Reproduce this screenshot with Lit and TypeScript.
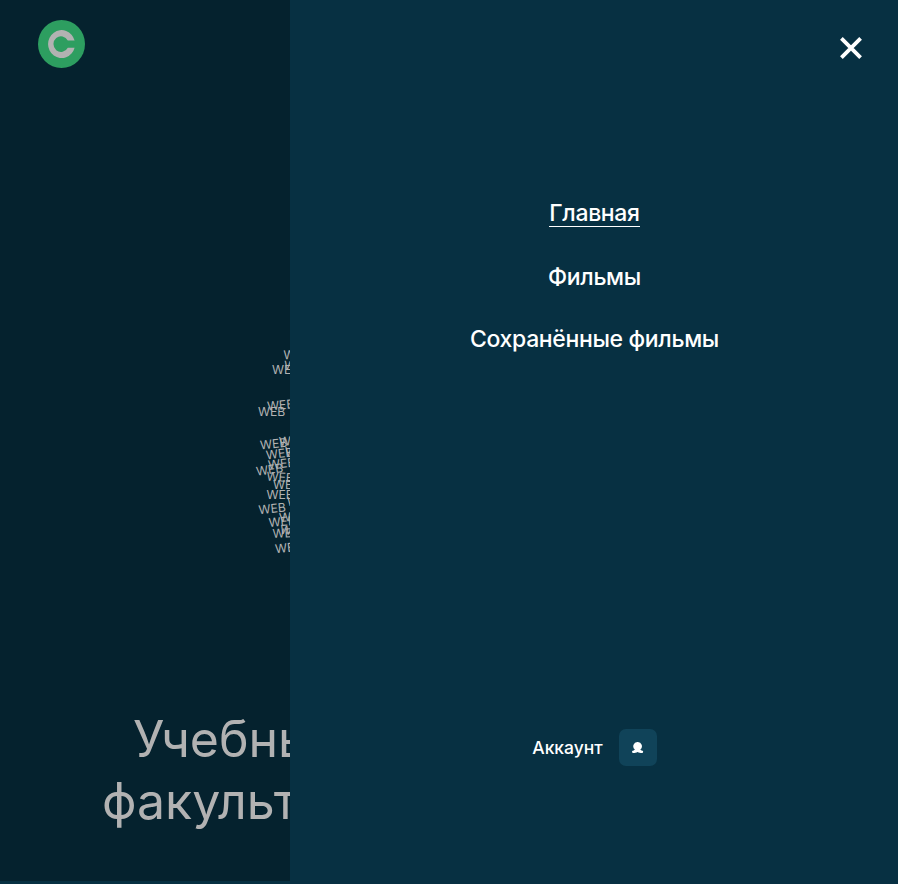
import { LitElement, html, css, svg } from "lit";
import { customElement } from "lit/decorators.js";

// Words scattered over the globe: left edge, vertical centre, tilt in degrees
const WORDS: [number, number, number][] = [
  [283.5, 354.6, -1], [284, 366, 4], [272, 369.6, 0], [267, 405, -5], [258, 411.6, 0],
  [260, 443.7, -6], [279, 440.6, -4], [266, 453.6, -7], [285, 451.6, 0], [268, 463.6, -6],
  [256, 469.6, -8], [266.5, 477, 4], [273, 484.6, 0], [266.5, 494.6, 0], [287, 501.5, 0],
  [258.5, 508.6, -6], [279, 516.6, -5], [268.5, 521.6, -5], [272.5, 533, -3], [280, 531, 8],
  [275, 547.4, -6],
];

@customElement("app-root")
export class AppRoot extends LitElement {
  static styles = css`
    :host {
      display: grid;
      grid-template-columns: 290px 1fr;
      height: 884px;
      overflow: hidden;
      background: #073042;
      color: #fff;
      font-family: Inter, sans-serif;
    }
    .hero {
      position: relative;
      display: flex;
      flex-direction: column;
      justify-content: space-between;
      height: 881px;
      box-sizing: border-box;
      padding: 20px 0 49px 38px;
      overflow: hidden;
      background: #05222e;
    }
    .logo { display: block; width: 47px; height: 48px; }
    .globe { position: absolute; inset: 0; width: 290px; height: 881px; }
    .word { font: 400 12.2px Inter, sans-serif; fill: #b2b2b2; }
    h1 {
      margin: 0;
      font-size: 50px;
      font-weight: 400;
      line-height: 62px;
      color: #b2b2b2;
      white-space: nowrap;
    }
    h1 span { display: block; padding-left: 64px; }
    h1 span:first-child { padding-left: 95px; }
    .menu {
      display: flex;
      flex-direction: column;
      align-items: center;
      box-sizing: border-box;
      padding: 37px 36px 118px;
    }
    .close {
      align-self: flex-end;
      width: 22px;
      height: 22px;
      padding: 0;
      border: 0;
      background: none;
      color: #fff;
    }
    .close svg { display: block; }
    nav {
      display: flex;
      flex-direction: column;
      align-items: center;
      margin-top: 139px;
      padding-left: 1px;
      font-size: 23px;
      font-weight: 500;
      letter-spacing: -0.35px;
      line-height: 30px;
    }
    nav a { margin-bottom: 32px; }
    nav a.current {
      height: 28px;
      border-bottom: 1px solid #fff;
      margin-bottom: 35px;
    }
    .account {
      display: flex;
      align-items: center;
      gap: 16px;
      margin-top: auto;
      padding-left: 1px;
      font-size: 17.5px;
      font-weight: 500;
    }
    .badge {
      display: grid;
      place-items: center;
      width: 38px;
      height: 37px;
      border-radius: 7px;
      background: #104359;
    }
  `;

  render() {
    return html`
      <section class="hero">
        <svg class="globe" viewBox="0 0 290 881">
          ${WORDS.map(([x, y, r]) => svg`<text class="word" transform="translate(${x} ${y + 4.4}) rotate(${r} 13 -4)">WEB</text>`)}
        </svg>
        <svg class="logo" viewBox="0 0 47 48">
          <ellipse cx="23.5" cy="24" rx="23.5" ry="24" fill="#2d9e60"></ellipse>
          <path d="M36.600 20.500H29.800A7.600 7.800 0 1 0 29.800 27.700H36.600A13.500 14 0 1 1 36.600 20.500Z" fill="#b2b2b2"></path>
        </svg>
        <h1><span>Учебный</span><span>факультета</span></h1>
      </section>
      <aside class="menu">
        <button class="close" aria-label="Закрыть">
          <svg width="22" height="22" viewBox="0 0 22 22"><path d="M1.400 1.400 20.600 20.600M20.600 1.400 1.400 20.600" stroke="currentColor" stroke-width="3.8"></path></svg>
        </button>
        <nav>
          <a class="current">Главная</a>
          <a>Фильмы</a>
          <a>Сохранённые фильмы</a>
        </nav>
        <div class="account">
          <span>Аккаунт</span>
          <span class="badge">
            <svg width="12" height="12" viewBox="0 0 12 12" fill="#fff"><path d="M5.600 0a4.200 4.200 0 0 1 2.700 7.500c.7.9 1.600 1.300 2.900 1.500l-.5 2C8.800 11.100 7 10.800 5.600 9.900 4.200 10.800 2.400 11.100.5 11L0 9c1.300-.2 2.200-.6 2.900-1.500A4.200 4.200 0 0 1 5.600 0z"></path></svg>
          </span>
        </div>
      </aside>
    `;
  }
}
